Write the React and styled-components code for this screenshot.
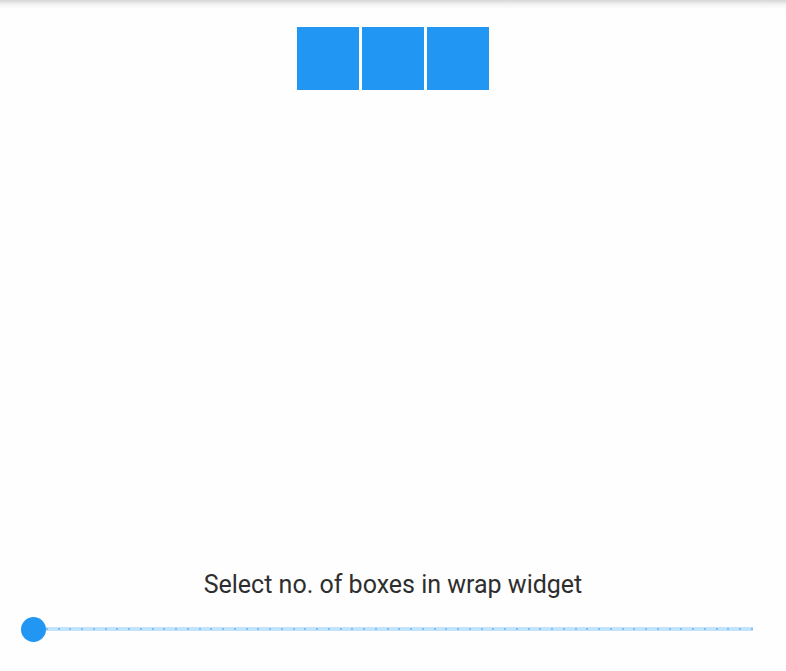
import styled, { createGlobalStyle } from 'styled-components';

const GlobalStyle = createGlobalStyle`
  html, body {
    margin: 0;
    padding: 0;
    background: #fefefe;
  }
  body {
    font-family: Roboto, "Noto Sans", sans-serif;
  }
`;

const Page = styled.div`
  position: relative;
  display: flex;
  flex-direction: column;
  height: 671px;
  overflow: hidden;
`;

const TopShadow = styled.div`
  position: absolute;
  top: 0;
  left: 0;
  right: 0;
  height: 9px;
  background: linear-gradient(to bottom, rgba(0, 0, 0, 0.16), rgba(0, 0, 0, 0.05) 45%, rgba(0, 0, 0, 0));
`;

const Wrap = styled.div`
  display: flex;
  flex-wrap: wrap;
  justify-content: center;
  gap: 2.5px;
  padding: 27px 16px 0;
`;

const Box = styled.div`
  width: 62.5px;
  height: 62.5px;
  background: #2196f3;
`;

const Spacer = styled.div`
  flex: 1;
`;

const Caption = styled.div`
  text-align: center;
  font-size: 25px;
  line-height: 30px;
  color: #2e2e2e;
`;

const SliderRow = styled.div`
  height: 48px;
  margin: 5px 0 18px;
  padding: 0 33px 0 34px;
  display: flex;
  align-items: center;
`;

const Track = styled.div`
  position: relative;
  flex: 1;
  height: 4px;
  background: #c3e2fc;
  display: flex;
  align-items: center;
  justify-content: space-between;
`;

const Tick = styled.span`
  width: 2px;
  height: 2px;
  border-radius: 1px;
  background: #64b5f6;
`;

const Thumb = styled.div`
  position: absolute;
  left: -13px;
  top: 50%;
  width: 25px;
  height: 25px;
  margin-top: -12.5px;
  border-radius: 50%;
  background: #2196f3;
`;

export default function App() {
  const boxes = 3;
  const divisions = 61;
  return (
    <>
      <GlobalStyle />
      <Page>
        <TopShadow />
        <Wrap>
          {Array.from({ length: boxes }, (_, i) => (
            <Box key={i} />
          ))}
        </Wrap>
        <Spacer />
        <Caption>Select no. of boxes in wrap widget</Caption>
        <SliderRow>
          <Track>
            {Array.from({ length: divisions + 1 }, (_, i) => (
              <Tick key={i} />
            ))}
            <Thumb />
          </Track>
        </SliderRow>
      </Page>
    </>
  );
}
